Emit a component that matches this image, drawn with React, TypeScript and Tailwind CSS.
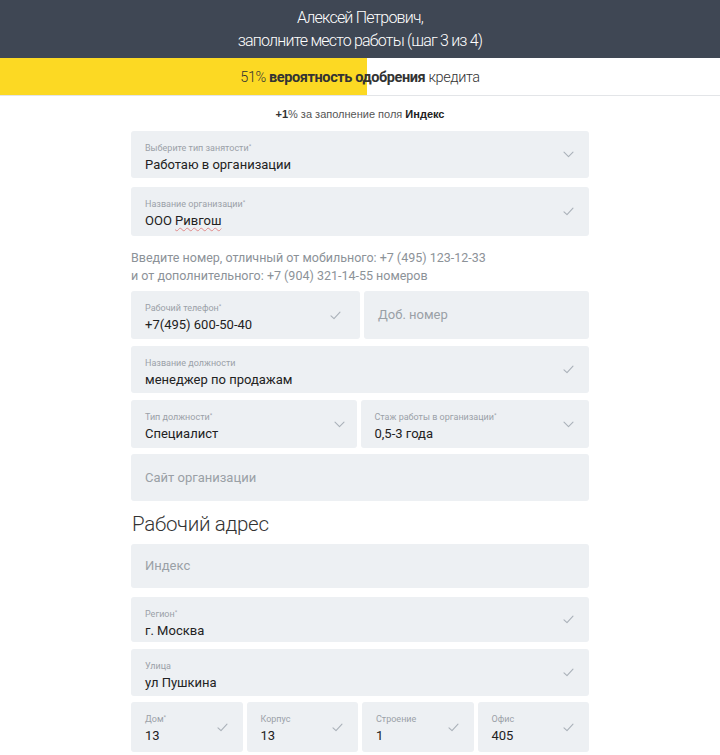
import React from "react";

const Check = () => (
  <svg width="11" height="9" viewBox="0 0 11 9" fill="none" className="shrink-0">
    <path d="M1 4.8 L4 7.6 L10 1.2" stroke="#aab1b9" strokeWidth="1.1" strokeLinecap="round" strokeLinejoin="round" />
  </svg>
);

const Chevron = () => (
  <svg width="11" height="7" viewBox="0 0 11 7" fill="none" className="shrink-0">
    <path d="M1 1.2 L5.5 5.6 L10 1.2" stroke="#aab1b9" strokeWidth="1.1" strokeLinecap="round" strokeLinejoin="round" />
  </svg>
);

type FieldProps = {
  label?: string;
  required?: boolean;
  value?: string;
  placeholder?: string;
  icon?: "check" | "chevron" | null;
  className?: string;
  underline?: boolean;
  pr?: string;
};

function Field({ label, required, value, placeholder, icon, className = "", underline, pr = "pr-[15px]" }: FieldProps) {
  return (
    <div className={`flex justify-between rounded-[3px] bg-[#edf0f3] pl-[14px] ${pr} ${className}`}>
      {placeholder ? (
        <div className="self-center text-[13px] leading-[18px] text-[#9aa0a6]">{placeholder}</div>
      ) : (
        <div className="flex flex-col pt-[11px]">
          <div className="text-[9px] leading-[12px] text-[#9ba1a8]">
            {label}
            {required && <sup className="text-[6px] top-[-3px]">*</sup>}
          </div>
          <div className="text-[13px] leading-[18px] text-[#222] mt-[2px]">
            {underline ? (
              <>
                ООО <span className="underline decoration-wavy decoration-[#e08a8a] decoration-[1px] underline-offset-2">Ривгош</span>
              </>
            ) : (
              value
            )}
          </div>
        </div>
      )}
      {icon && (
        <div className="self-center">
          {icon === "check" ? <Check /> : <Chevron />}
        </div>
      )}
    </div>
  );
}

export default function App() {
  return (
    <div className="w-[720px] h-[755px] bg-white overflow-hidden" style={{ fontFamily: "Roboto, 'Noto Sans', sans-serif" }}>
      <div className="h-[58px] bg-[#3f4754] text-white flex flex-col items-center justify-center text-[16px] leading-[23px] font-light tracking-[-0.8px]">
        <div>Алексей Петрович,</div>
        <div>заполните место работы (шаг 3 из 4)</div>
      </div>
      <div className="relative h-[38px] border-b border-[#e3e5e8]">
        <div className="absolute left-0 top-0 h-full w-[367px] bg-[#fcd923]" />
        <div className="relative h-full pt-[2px] flex items-center justify-center text-[14.5px] text-[#333] tracking-[-0.4px]">
          <span className="font-light">51%&nbsp;</span>
          <span className="font-bold">вероятность одобрения</span>
          <span className="font-light">&nbsp;кредита</span>
        </div>
      </div>
      <div
        className="mt-[11px] text-center text-[11px] leading-[14px] text-[#555]"
        style={{ fontFamily: "'Liberation Sans', Arial, sans-serif" }}
      >
        <span className="font-bold text-[#333]">+1</span>% за заполнение поля <span className="font-bold text-[#222]">Индекс</span>
      </div>

      <div className="w-[458px] mx-auto mt-[10px] flex flex-col">
        <Field label="Выберите тип занятости" required value="Работаю в организации" icon="chevron" className="h-[47px]" />
        <Field label="Название организации" required underline icon="check" className="h-[49px] mt-[9px]" />
        <div className="mt-[13px] text-[12.5px] leading-[18px] text-[#8c9298]">
          <div>Введите номер, отличный от мобильного: +7 (495) 123-12-33</div>
          <div>и от дополнительного: +7 (904) 321-14-55 номеров</div>
        </div>
        <div className="mt-[6px] flex gap-[4px]">
          <Field label="Рабочий телефон" required value="+7(495) 600-50-40" icon="check" className="h-[48px] flex-1" pr="pr-[19px]" />
          <Field placeholder="Доб. номер" className="h-[48px] flex-1" />
        </div>
        <Field label="Название должности" value="менеджер по продажам" icon="check" className="h-[47px] mt-[7px]" />
        <div className="mt-[7px] flex gap-[4px]">
          <Field label="Тип должности" required value="Специалист" icon="chevron" className="h-[48px] flex-1" pr="pr-[12px]" />
          <Field label="Стаж работы в организации" required value="0,5-3 года" icon="chevron" className="h-[48px] flex-1" />
        </div>
        <Field placeholder="Сайт организации" className="h-[47px] mt-[6px]" />

        <div className="mt-[10px] text-[20.5px] leading-[26px] font-light text-[#333] tracking-[-0.3px] pl-[1px]">Рабочий адрес</div>

        <Field placeholder="Индекс" className="h-[44px] mt-[7px]" />
        <Field label="Регион" required value="г. Москва" icon="check" className="h-[45px] mt-[9px]" />
        <Field label="Улица" value="ул Пушкина" icon="check" className="h-[47px] mt-[7px]" />
        <div className="mt-[6px] grid grid-cols-4 gap-[4px]">
          <Field label="Дом" required value="13" icon="check" className="h-[50px]" />
          <Field label="Корпус" value="13" icon="check" className="h-[50px]" />
          <Field label="Строение" value="1" icon="check" className="h-[50px]" />
          <Field label="Офис" value="405" icon="check" className="h-[50px]" />
        </div>
      </div>
    </div>
  );
}
